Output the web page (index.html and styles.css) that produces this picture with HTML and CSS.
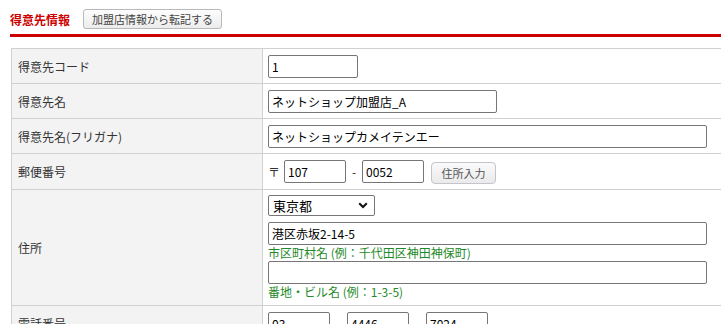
FILE: index.html
```html
<!DOCTYPE html>
<html lang="ja">
<head>
  <meta charset="UTF-8" />
  <title>得意先情報</title>
  <link rel="stylesheet" href="styles.css">
</head>
<body>
  <div class="page">
    <div class="section-head">
      <h2>得意先情報</h2>
      <button type="button" class="btn-copy">加盟店情報から転記する</button>
    </div>
    <div class="red-line"></div>

    <table class="form-table">
      <tr>
        <th>得意先コード</th>
        <td><input type="text" class="w-code" value="1"></td>
      </tr>
      <tr>
        <th>得意先名</th>
        <td><input type="text" class="w-name" value="ネットショップ加盟店_A"></td>
      </tr>
      <tr>
        <th>得意先名(フリガナ)</th>
        <td><input type="text" class="w-full" value="ネットショップカメイテンエー"></td>
      </tr>
      <tr>
        <th>郵便番号</th>
        <td>
          <div class="zip">
            <span class="mark">〒</span>
            <input type="text" class="w-zip" value="107">
            <span class="dash">-</span>
            <input type="text" class="w-zip" value="0052">
            <button type="button" class="btn-addr">住所入力</button>
          </div>
        </td>
      </tr>
      <tr>
        <th>住所</th>
        <td>
          <div class="addr">
            <div class="select">
              <span>東京都</span>
              <svg width="10" height="7" viewBox="0 0 10 7"><path d="M1.2 1.2 L5 5 L8.8 1.2" fill="none" stroke="#111" stroke-width="2"/></svg>
            </div>
            <input type="text" class="w-full mt" value="港区赤坂2-14-5">
            <p class="note">市区町村名 (例：千代田区神田神保町)</p>
            <input type="text" class="w-full" value="">
            <p class="note">番地・ビル名 (例：1-3-5)</p>
          </div>
        </td>
      </tr>
      <tr>
        <th>電話番号</th>
        <td>
          <div class="tel">
            <input type="text" class="w-tel" value="03">
            <span class="dash">-</span>
            <input type="text" class="w-tel" value="4446">
            <span class="dash">-</span>
            <input type="text" class="w-tel" value="7024">
          </div>
        </td>
      </tr>
    </table>
  </div>
</body>
</html>
```

FILE: styles.css
```css
* {
  box-sizing: border-box;
  margin: 0;
  padding: 0;
}

html, body {
  overflow: hidden;
  background: #fff;
  font-family: "Noto Sans CJK JP", "Noto Sans", sans-serif;
  font-size: 12px;
  color: #333;
}

.page {
  width: 780px;
  padding: 9px 0 0 10px;
}

.section-head {
  display: flex;
  align-items: center;
  height: 20px;
}

.section-head h2 {
  font-size: 12px;
  font-weight: bold;
  color: #cc0000;
  margin-right: 13px;
}

.btn-copy {
  height: 20px;
  width: 139px;
  border: 1px solid #b8b8b8;
  border-radius: 3px;
  background: linear-gradient(#fdfdfd, #ececec);
  font-family: inherit;
  font-size: 11px;
  color: #444;
}

.red-line {
  height: 3px;
  margin-top: 5px;
  background: #cc0000;
}

.form-table {
  margin: 11px 0 0 1px;
  width: 770px;
  border-collapse: collapse;
}

.form-table th,
.form-table td {
  border: 1px solid #d0d0d0;
  padding: 5px 5px 5px;
  text-align: left;
  font-weight: normal;
  height: 35px;
}

.form-table th {
  width: 251px;
  padding-left: 6px;
  background: #f2f3f2;
  color: #333;
}

.form-table input {
  display: block;
  height: 23px;
  border: 1px solid #767676;
  border-radius: 2px;
  padding: 0 3px;
  font-family: inherit;
  font-size: 12px;
  color: #000;
}

.w-code { width: 90px; }
.w-name { width: 229px; }
.w-full { width: 439px; }
.w-zip { width: 62px; }
.w-tel { width: 62px; }

.zip,
.tel {
  display: flex;
  align-items: center;
}

.zip .mark {
  width: 16px;
}

.zip .dash {
  width: 16px;
  text-align: center;
}

.tel .dash {
  width: 17px;
  text-align: center;
}

.btn-addr {
  margin: 3px 0 0 7px;
  height: 22px;
  width: 65px;
  border: 1px solid #c4c4cc;
  border-radius: 4px;
  background: linear-gradient(#fafafa, #eaeaea);
  font-family: inherit;
  font-size: 11px;
  color: #555;
}

.select {
  display: flex;
  align-items: center;
  justify-content: space-between;
  width: 107px;
  height: 21px;
  padding: 0 6px 0 4px;
  border: 1px solid #767676;
  border-radius: 2px;
  font-size: 13px;
  color: #000;
}

.addr .mt {
  margin-top: 6px;
}

.note {
  height: 16px;
  line-height: 16px;
  color: #1f8a2a;
}
```
